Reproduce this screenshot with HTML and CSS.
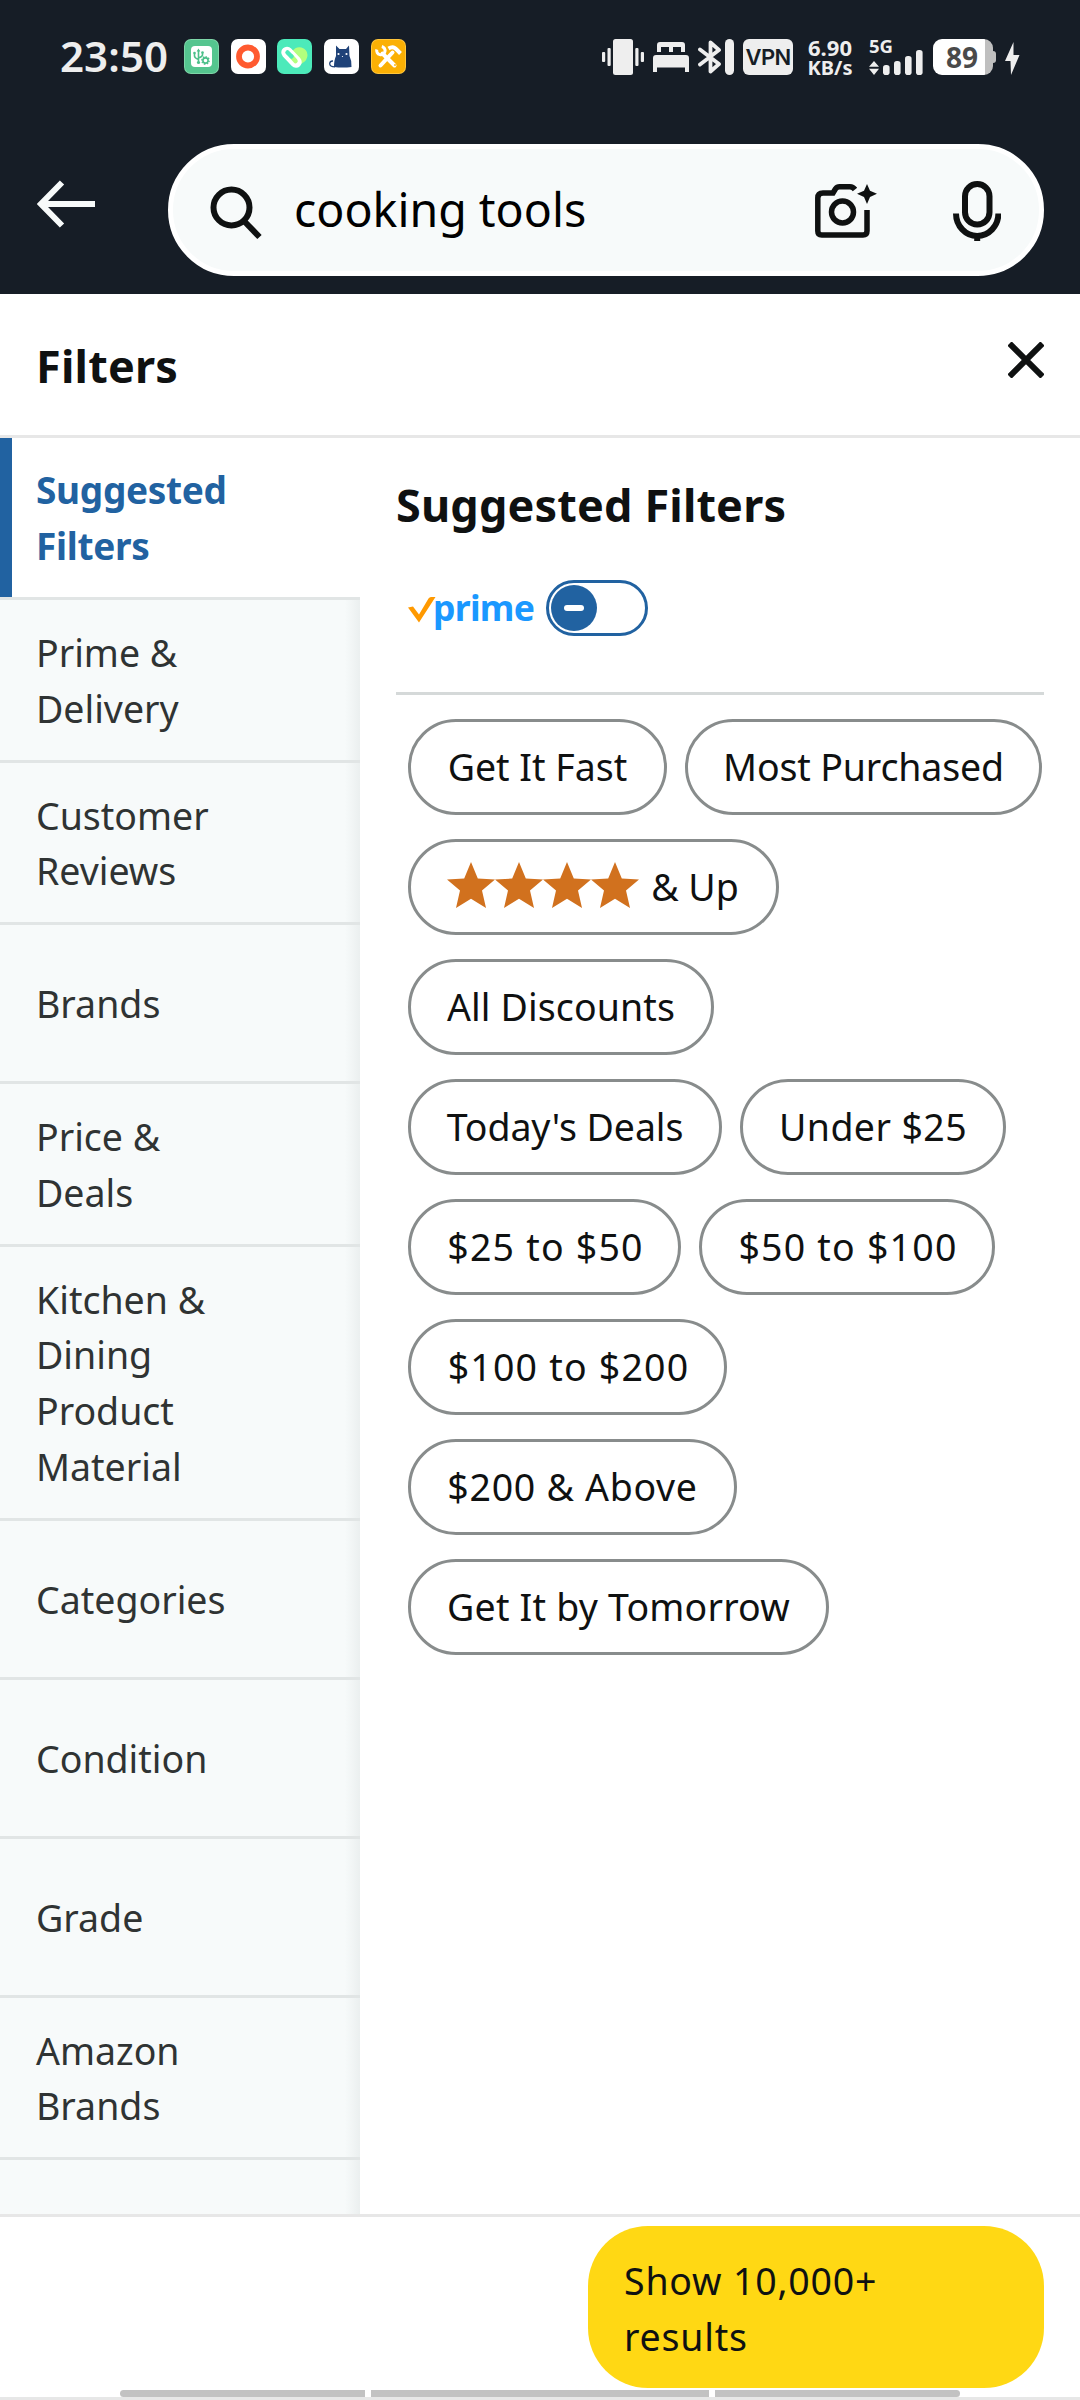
FILE: index.html
```html
<!DOCTYPE html>
<html lang="en">
<head>
<meta charset="utf-8">
<title>Filters</title>
<link rel="stylesheet" href="styles.css">
</head>
<body>
<div class="screen">
  <header class="top">
    <div class="status">
      <span class="time">23:50</span>
      <div class="apps">
        <svg width="35" height="35" viewBox="0 0 35 35"><rect width="35" height="35" rx="7" fill="#7ed6a8"/><rect x="1" y="1" width="33" height="33" rx="6" fill="#55c58f"/><rect x="7" y="7" width="21" height="21" rx="4" fill="#fff"/><g fill="none" stroke="#4cc08a" stroke-width="1.6"><path d="M14.500 11v12M10.500 14.500v2.500q0 2 4 3.500M18.500 13.500v2.500q0 1.500-4 3"/><circle cx="21.500" cy="21.500" r="2.600"/><path stroke-dasharray="1.400 1.320" d="M21.500 17.900a3.600 3.600 0 1 1-.01 0"/></g><path d="M14.500 9.500l1.800 3h-3.600z" fill="#4cc08a"/><circle cx="14.500" cy="23.500" r="1.600" fill="#4cc08a"/><circle cx="10.500" cy="14" r="1.300" fill="#4cc08a"/><circle cx="18.500" cy="13.500" r="1.300" fill="#4cc08a"/></svg>
        <svg width="35" height="35" viewBox="0 0 35 35"><rect width="35" height="35" rx="7" fill="#fff"/><circle cx="17" cy="17.500" r="9" fill="none" stroke="#ff5a2f" stroke-width="5.800"/></svg>
        <svg width="35" height="35" viewBox="0 0 35 35"><rect width="35" height="35" rx="7" fill="#4ceaba"/><path d="M15 12.500q4-5.500 9.500-4 6 2 6 7.500 0 5-5 8l-6.500 4.500z" fill="#b4ff7e"/><path d="M10 13.500l9 9.500" stroke="#fff" stroke-width="11.500" stroke-linecap="round"/><path d="M14.500 17.500l4 4.500" stroke="#b4ff7e" stroke-width="4.500" stroke-linecap="round"/><path d="M10.500 13.500l4 4" stroke="#4ceaba" stroke-width="4.500" stroke-linecap="round"/></svg>
        <svg width="35" height="35" viewBox="0 0 35 35"><rect width="35" height="35" rx="7" fill="#fff"/><path d="M12 6.500l3.500 3.500h6.500L25 6.500 25.500 17q2.500 5 2 11-9 1.200-17.500 0 0-7 2-11z" fill="#1f4278"/><path d="M11 27.800q-5.500 0-5.300-3.300.3-2.700 3.300-2.500" fill="none" stroke="#1f4278" stroke-width="1.300"/><circle cx="14.500" cy="15" r="1.100" fill="#fff"/><circle cx="22.500" cy="15" r="1.100" fill="#fff"/><circle cx="18.500" cy="17.500" r=".6" fill="#fff"/></svg>
        <svg width="35" height="35" viewBox="0 0 35 35"><rect width="35" height="35" rx="7" fill="#ffc53b"/><rect x="1" y="1" width="33" height="33" rx="6" fill="#fbb004"/><g fill="none" stroke="#fff"><path d="M11.500 14.500l12 12" stroke-width="4" stroke-linecap="round"/><path d="M9.500 26.500L21.500 13.500" stroke-width="4" stroke-linecap="round"/><path d="M5.800 10.500a4.200 4.200 0 1 0 5-3" stroke-width="3"/><path d="M17.500 9.500q5-3 8.500 1.500l3.500 3.500" stroke-width="4"/></g><circle cx="24" cy="26" r=".9" fill="#fbb004"/></svg>
      </div>
      <div class="indicators">
        <svg class="vibrate" width="42" height="36" viewBox="0 0 42 36" fill="#eee"><rect x="11" width="20" height="36" rx="2.500"/><rect x="5.500" y="9" width="3.200" height="18" rx="1"/><rect y="13" width="3.200" height="10" rx="1"/><rect x="33.300" y="9" width="3.200" height="18" rx="1"/><rect x="38.800" y="13" width="3.200" height="10" rx="1"/></svg>
        <svg class="bed" width="36" height="36" viewBox="0 0 36 36" fill="#eee"><path d="M4 13V6q0-3 3-3h22q3 0 3 3v7h-4V8h-8v5h-4V8H8v5z"/><path d="M0 33V19q0-3 3-3h30q3 0 3 3v14h-4v-4.500H4V33z"/></svg>
        <svg class="bt" width="36" height="36" viewBox="0 0 36 36"><path d="M2 10.500l19 14.500L12.500 32.500V3.500L21 11 2 25.500" fill="none" stroke="#eee" stroke-width="3.800" stroke-linecap="round" stroke-linejoin="round"/><rect x="27" width="9" height="36" rx="4.500" fill="#eee"/></svg>
        <span class="vpn">VPN</span>
        <span class="speed"><span>6.90</span><small>KB/s</small></span>
        <span class="signal"><b>5G</b>
          <svg width="54" height="26" viewBox="0 0 54 26" fill="#eee"><path d="M0 17.700L5 12l5 5.700zM0 19.700L5 26l5-6.300z"/><rect x="14" y="16" width="6.600" height="10" rx="2.800"/><rect x="25" y="12" width="6.600" height="14" rx="2.800"/><rect x="36" y="7" width="6.600" height="19" rx="2.800"/><rect x="47" y="1" width="6.600" height="25" rx="2.800"/></svg>
        </span>
        <span class="battery"><span>89</span></span>
        <svg class="bolt" width="15" height="33" viewBox="0 0 15 33"><path d="M8.500 0L0 19h5.500l.5 14 8.500-20H8.500z" fill="#eee"/></svg>
      </div>
    </div>
    <div class="searchrow">
      <svg class="back" width="58" height="48" viewBox="0 0 58 48" fill="none" stroke="#f7fafa" stroke-width="6"><path d="M58 24H5M25 2.500L4 24l21 21.500"/></svg>
      <div class="search">
        <svg class="mag" width="52" height="54" viewBox="0 0 52 54" fill="none" stroke="#0f1111" stroke-width="6"><circle cx="21.500" cy="21.500" r="18"/><path d="M34 35l15.500 16"/></svg>
        <span class="query">cooking tools</span>
        <svg class="cam" width="64" height="54" viewBox="0 0 64 54"><g fill="none" stroke="#0f1111" stroke-width="5.500"><path d="M40 5.500q-2-2.700-5-2.700H24.500q-2.500 0-4 2L18 9H8Q2.800 9 2.800 14V47q0 4 4 4H48q4 0 4-4V26"/><circle cx="27.500" cy="28" r="11"/></g><path d="M52 0l3 6.800 7 3L55 13l-3 7-3-7-7-3.200 7-3z" fill="#0f1111"/></svg>
        <svg class="mic" width="48" height="60" viewBox="0 0 48 60" fill="none" stroke="#0f1111" stroke-width="6"><rect x="12" y="3" width="24.500" height="40.500" rx="12.200"/><path d="M3 32.500a21.200 22.500 0 0 0 42.400 0M24.200 52v8"/></svg>
      </div>
    </div>
  </header>

  <div class="titlebar">
    <h1>Filters</h1>
    <svg width="36" height="36" viewBox="0 0 36 36" fill="none" stroke="#0f1111" stroke-width="6"><path d="M1.500 1.500l33 33M34.500 1.500l-33 33"/></svg>
  </div>

  <main class="panes">
    <nav class="side">
      <a class="active">Suggested Filters</a>
      <a>Prime &amp; Delivery</a>
      <a>Customer Reviews</a>
      <a>Brands</a>
      <a>Price &amp;<br>Deals</a>
      <a>Kitchen &amp; Dining Product Material</a>
      <a>Categories</a>
      <a>Condition</a>
      <a>Grade</a>
      <a>Amazon Brands</a>
      <a></a>
    </nav>
    <section class="content">
      <h2>Suggested Filters</h2>
      <div class="prime">
        <svg width="28" height="26" viewBox="0 0 28 26"><path d="M0 10.500l5-1 6 8L20.500 1.500Q21.500 0 23 0h4.500L11 25.500z" fill="#ff9900"/></svg>
        <span class="word">prime</span>
        <span class="toggle"><span class="knob"></span></span>
      </div>
      <div class="chips">
        <span class="chip w-fast">Get It Fast</span>
        <span class="chip w-most">Most Purchased</span>
        <span class="chip w-stars"><svg width="192" height="46" viewBox="0 0 192 46" fill="#d1711e"><defs><path id="star" d="M24 0l6.800 16.500L48 17.500 35 28.500 39 46 24 36.800 9 46l4-17.500L0 17.500l17.200-1z"/></defs><use href="#star"/><use href="#star" x="48"/><use href="#star" x="96"/><use href="#star" x="144"/></svg>&amp; Up</span>
        <span class="chip w-disc">All Discounts</span>
        <span class="chip w-today">Today's Deals</span>
        <span class="chip w-under">Under $25</span>
        <span class="chip money w-25">$25 to $50</span>
        <span class="chip money w-50">$50 to $100</span>
        <span class="chip money w-100">$100 to $200</span>
        <span class="chip w-200">$200 &amp; Above</span>
        <span class="chip w-tom">Get It by Tomorrow</span>
      </div>
    </section>
  </main>

  <footer class="bottom">
    <button class="show">Show 10,000+<br>results</button>
    <div class="handles"><i></i><i></i><i></i></div>
  </footer>
</div>
</body>
</html>
```
FILE: styles.css
```css
* { box-sizing: border-box; }
body { margin: 0; background: #fff; font-family: "Noto Sans", "Open Sans", sans-serif; color: #0f1111; }
svg { display: block; flex: none; }
.screen { width: 1080px; height: 2400px; display: flex; flex-direction: column; overflow: hidden; }

.top { height: 294px; background: #161d26; display: flex; flex-direction: column; flex: none; }
.status { height: 144px; padding: 39px 60px 0 60px; display: flex; align-items: flex-start; color: #eee; }
.time { width: 124px; font-size: 42px; font-weight: 600; line-height: 34px; letter-spacing: .1px; }
.apps { display: flex; gap: 11.700px; }
.indicators { display: flex; margin-left: auto; }
.bed { margin-left: 9px; }
.bt { margin-left: 9px; }
.vpn { margin-left: 9px; width: 50px; height: 36px; border-radius: 6px; background: #eee; color: #161d26; font: 600 22px/36px Inter, sans-serif; text-align: center; letter-spacing: -.7px; }
.speed { margin-left: 14px; width: 46px; display: flex; flex-direction: column; font-weight: 700; font-size: 22px; line-height: 16px; text-align: center; }
.speed small { font-size: 20px; line-height: 25px; }
.signal { margin-left: 16px; width: 54px; height: 36px; display: flex; flex-direction: column; }
.signal b { font-size: 18.500px; line-height: 13px; height: 10px; }
.battery { margin-left: 10px; width: 63px; height: 36px; position: relative; }
.battery::after { content: ""; position: absolute; right: 0; top: 12px; width: 4px; height: 12px; border-radius: 0 3px 3px 0; background: #bfbfbf; }
.battery span { display: block; width: 60px; height: 36px; border-radius: 9px; background: linear-gradient(90deg, #fff 52px, #bfbfbf 52px); color: #4a4a4a; font-weight: 700; font-size: 28px; line-height: 36px; padding-left: 13px; }
.bolt { margin: 3px 0 0 9px; }

.searchrow { display: flex; padding: 0 36px 0 37px; }
.back { margin-top: 36px; }
.search { margin-left: 73px; width: 876px; height: 132px; border: 5px solid #fff; border-radius: 66px; background: #f7fafa; display: flex; align-items: flex-start; }
.mag { margin: 37px 0 0 37px; }
.query { margin-left: 32px; font-size: 46.500px; line-height: 122px; margin-top: -1px; color: #000; width: 521px; }
.cam { margin: 35px 0 0 0; }
.mic { margin: 32px 0 0 74px; }

.titlebar { height: 144px; flex: none; border-bottom: 3px solid #e7e7e7; display: flex; justify-content: space-between; align-items: center; padding: 0 36px; }
.titlebar h1 { margin: 2px 0 0; font-size: 45px; line-height: 60px; font-weight: 700; letter-spacing: .2px; }
.titlebar svg { margin-bottom: 9px; }

.panes { flex: 1; min-height: 0; display: flex; }
.side { width: 360px; flex: none; overflow: hidden; color: #2f3333; background: #f7fafa; font-size: 37.500px; line-height: 55.700px; }
.side a { display: flex; flex-direction: column; justify-content: center; width: 360px; min-height: 159px; padding: 25px 150px 23.200px 36px; border-bottom: 3px solid #e1e5e5; background: linear-gradient(90deg, #f7fafa 345px, #ebefef 360px); }
.side a.active { height: 162px; padding: 24px 120px 23px 36px; background: linear-gradient(90deg, #2162a1 12px, #fff 12px); color: #2162a1; font-weight: 700; font-size: 37px; letter-spacing: -.3px; }

.content { flex: 1; padding: 37px 36px 0 36px; }
.content h2 { margin: 0; font-size: 45px; line-height: 60px; font-weight: 700; letter-spacing: .15px; }
.prime { height: 160px; padding: 45px 0 0 12px; border-bottom: 3px solid #d5d9d9; display: flex; align-items: flex-start; }
.prime svg { margin-top: 17px; }
.word { color: #1a98ff; font-weight: 700; font-size: 35.500px; line-height: 54px; letter-spacing: -.7px; width: 110px; margin-left: -3px; }
.toggle { width: 102px; height: 56px; border: 3px solid #2162a1; border-radius: 28px; padding: 2px; margin-left: 3px; }
.knob { width: 46px; height: 46px; border-radius: 50%; background: #2162a1; display: flex; align-items: center; justify-content: center; }
.knob::after { content: ""; width: 20px; height: 6px; border-radius: 3px; background: #fff; }

.chips { display: flex; flex-wrap: wrap; gap: 24px 18px; padding: 24px 0 0 12px; margin-right: -10px; }
.chip { height: 96px; border: 3px solid #888c8c; border-radius: 48px; font-size: 37.500px; line-height: 90px; display: flex; justify-content: center; white-space: nowrap; }
.w-fast { width: 259px; }
.w-most { width: 357px; letter-spacing: -.15px; }
.w-stars { width: 371px; margin-right: 100px; }
.w-stars svg { margin: 20px 12px 0 -1px; }
.w-disc { width: 306px; margin-right: 200px; letter-spacing: .1px; }
.w-today { width: 314px; letter-spacing: -.1px; }
.w-under { width: 266px; letter-spacing: .4px; }
.money { letter-spacing: 1.200px; padding-left: 2px; }
.w-25 { width: 273px; }
.w-50 { width: 296px; }
.w-100 { width: 319px; margin-right: 200px; }
.w-200 { width: 329px; margin-right: 200px; letter-spacing: .7px; }
.w-tom { width: 421px; letter-spacing: .2px; }

.bottom { height: 186px; flex: none; border-top: 3px solid #e7e7e7; border-bottom: 3px solid #e7e7e7; padding: 9px 36px 0 120px; display: flex; flex-direction: column; }
.show { align-self: flex-end; width: 456px; height: 162px; flex: none; border: 0; border-radius: 60px; background: #ffd814; padding: 4px 36px 0; text-align: left; font: 37.500px/56px "Noto Sans", sans-serif; letter-spacing: .8px; color: #0f1111; }
.handles { margin-top: 2px; height: 7px; width: 840px; display: flex; gap: 6px; }
.handles i { background: #c2c2c2; width: 245px; }
.handles i:nth-child(2) { width: 338px; }
.handles i:first-child { border-radius: 4px 0 0 4px; }
.handles i:last-child { border-radius: 0 4px 4px 0; }
```
